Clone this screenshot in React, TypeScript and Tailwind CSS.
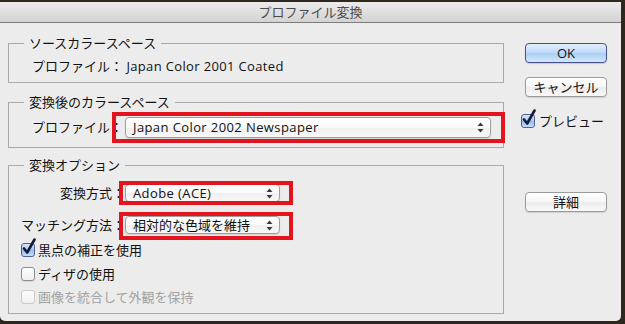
import React from "react";

const FONT = "font-['Open_Sans','Noto_Sans_CJK_JP',sans-serif]";

function Arrows() {
  return (
    <svg width="7" height="11" viewBox="0 0 7 11" className="shrink-0">
      <path d="M3.5 0.5 L6.5 4 L0.5 4 Z" fill="#3a3a3a" />
      <path d="M3.5 10.5 L6.5 7 L0.5 7 Z" fill="#3a3a3a" />
    </svg>
  );
}

function Select({ className, text, latin }: { className: string; text: string; latin?: boolean }) {
  return (
    <div
      className={
        "flex items-center rounded-[4px] border border-[#9e9e9e] bg-[linear-gradient(to_bottom,#ffffff_0%,#fafafa_50%,#f0f0f0_51%,#f7f7f7_100%)] shadow-[0_1px_1px_rgba(0,0,0,0.12)] pl-[7px] pr-[6px] " +
        className
      }
    >
      <span className={"flex-1 text-[13px] leading-none text-[#111] " + (latin ? "tracking-[0.4px]" : "")}>{text}</span>
      <Arrows />
    </div>
  );
}

function Check({ checked, disabled }: { checked?: boolean; disabled?: boolean }) {
  return (
    <div className="relative w-[14px] h-[14px] shrink-0">
      <div
        className={
          "w-[14px] h-[14px] rounded-[3px] border " +
          (checked
            ? "border-[#52608f] bg-[linear-gradient(to_bottom,#d7e6fa_0%,#a9c9f0_50%,#93bbec_51%,#c5ddf8_100%)]"
            : disabled
            ? "border-[#c9c9c9] bg-[linear-gradient(to_bottom,#fbfbfb,#f1f1f1)]"
            : "border-[#8e8e8e] bg-[linear-gradient(to_bottom,#ffffff,#efefef)] shadow-[0_1px_1px_rgba(0,0,0,0.1)]")
        }
      />
      {checked && (
        <svg width="16" height="18" viewBox="0 0 16 18" className="absolute left-[0px] top-[-5px]">
          <path d="M3 10.5 L6.2 14.5 L13.5 1.5" fill="none" stroke="#141a3a" strokeWidth="2.6" strokeLinecap="round" strokeLinejoin="round" />
        </svg>
      )}
    </div>
  );
}

function Button({ label, primary }: { label: string; primary?: boolean }) {
  return (
    <div
      className={
        "w-[82px] h-[20px] rounded-[4px] border flex items-center justify-center text-[13px] leading-none text-[#111] " +
        (primary
          ? "border-[#4c4f8f] bg-[linear-gradient(to_bottom,#e1eefc_0%,#bcd9f8_50%,#a8cdf5_51%,#d3e8fc_100%)] shadow-[0_1px_1px_rgba(0,0,0,0.15)]"
          : "border-[#9b9b9b] bg-[linear-gradient(to_bottom,#ffffff_0%,#f6f6f6_50%,#ececec_51%,#f9f9f9_100%)] shadow-[0_1px_1px_rgba(0,0,0,0.12)]")
      }
    >
      {label}
    </div>
  );
}

export default function App() {
  return (
    <div className={"relative w-[625px] h-[324px] overflow-hidden bg-[#2e271d] pt-[2px] " + FONT}>
      <div className="w-[621px] h-[319px] bg-[#ececec] rounded-b-[5px] flex flex-col">
        <div className="h-[21px] border-b border-[#7d7d7d] bg-[linear-gradient(to_bottom,#ebebeb,#d3d3d3)] flex items-center justify-center text-[13px] leading-none text-[#4a4a4a]">
          プロファイル変換
        </div>
        <div className="flex pl-[8px]">
          <div className="w-[496px] flex flex-col">
            <fieldset className="mt-[12px] h-[48px] border border-[#a9a9a9]">
              <legend className="ml-[15px] px-[5px] text-[13px] leading-[16px] text-[#111]">ソースカラースペース</legend>
              <div className="mt-[7px] pl-[23px] h-[16px] flex items-center text-[13px] leading-none text-[#111] whitespace-pre">
                プロファイル： <span className="tracking-[0.35px]">Japan Color 2001 Coated</span>
              </div>
            </fieldset>
            <fieldset className="mt-[11px] h-[54px] border border-[#a9a9a9]">
              <legend className="ml-[15px] px-[5px] text-[13px] leading-[16px] text-[#111]">変換後のカラースペース</legend>
              <div className="mt-[7px] pl-[23px] flex items-center">
                <span className="w-[93px] text-[13px] leading-none text-[#111]">プロファイル：</span>
                <Select className="w-[366px] h-[21px]" text="Japan Color 2002 Newspaper" latin />
              </div>
            </fieldset>
            <fieldset className="mt-[9px] h-[157px] border border-[#a9a9a9]">
              <legend className="ml-[15px] px-[5px] text-[13px] leading-[16px] text-[#111]">変換オプション</legend>
              <div className="mt-[11px] flex items-center h-[18px]">
                <span className="w-[116px] text-right text-[13px] leading-none text-[#111]">変換方式：</span>
                <Select className="w-[155px] h-[18px]" text="Adobe (ACE)" latin />
              </div>
              <div className="mt-[14px] flex items-center h-[18px]">
                <span className="w-[116px] text-right text-[13px] leading-none text-[#111]">マッチング方法：</span>
                <Select className="w-[155px] h-[18px]" text="相対的な色域を維持" />
              </div>
              <div className="mt-[8px] h-[16px] pl-[12px] flex items-center gap-[3px] text-[13px] leading-none text-[#111]">
                <Check checked />
                <span>黒点の補正を使用</span>
              </div>
              <div className="mt-[8px] h-[16px] pl-[12px] flex items-center gap-[3px] text-[13px] leading-none text-[#111]">
                <Check />
                <span>ディザの使用</span>
              </div>
              <div className="mt-[7px] h-[16px] pl-[12px] flex items-center gap-[3px] text-[13px] leading-none text-[#a3a3a3]">
                <Check disabled />
                <span>画像を統合して外観を保持</span>
              </div>
            </fieldset>
          </div>
          <div className="ml-[21px] w-[82px] flex flex-col">
            <div className="mt-[20px]">
              <Button label="OK" primary />
            </div>
            <div className="mt-[14px]">
              <Button label="キャンセル" />
            </div>
            <div className="mt-[16px] ml-[-4px] h-[16px] flex items-center gap-[4px] text-[13px] leading-none text-[#111]">
              <Check checked />
              <span>プレビュー</span>
            </div>
            <div className="mt-[63px]">
              <Button label="詳細" />
            </div>
          </div>
        </div>
      </div>
      <div className="absolute left-[112px] top-[112px] w-[393px] h-[31px] border-[4px] border-[#e3141e]" />
      <div className="absolute left-[119px] top-[181px] w-[174px] h-[24px] border-[4px] border-[#e3141e]" />
      <div className="absolute left-[119px] top-[212px] w-[174px] h-[28px] border-[4px] border-[#e3141e]" />
    </div>
  );
}
